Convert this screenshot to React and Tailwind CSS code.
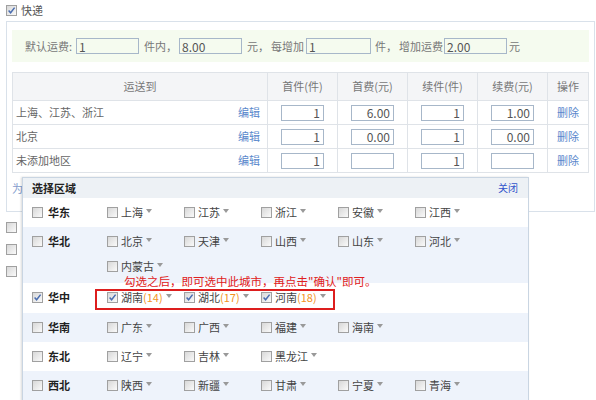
import React from 'react'

const Box = ({ checked }) => (
  <span className="inline-flex w-[11px] h-[11px] shrink-0 items-center justify-center border border-[#a0a0a0] bg-linear-to-br from-[#d8d8d8] to-[#fafafa]">
    {checked && (
      <svg viewBox="0 0 9 9" className="w-[9px] h-[9px]">
        <path d="M1.6 4.6 L3.6 6.8 L7.6 1.6" stroke="#4a6db0" strokeWidth="1.5" fill="none" />
      </svg>
    )}
  </span>
)

const Arrow = () => (
  <span className="ml-[3px] mb-[3px] inline-block w-0 h-0 border-l-[3px] border-r-[3px] border-t-[4px] border-l-transparent border-r-transparent border-t-[#999]" />
)

const Field = ({ value, w = 'w-[63px]' }) => (
  <input readOnly value={value} className={`${w} h-[16px] border border-[#a7b7c9] px-[2px] text-[12px] text-[#555] leading-none outline-none`} />
)

const Cell = ({ value }) => (
  <input readOnly value={value} className="w-[43px] h-[16px] border border-[#a7b7c9] px-[3px] text-right text-[12px] text-[#555] leading-none outline-none" />
)

const rows = [
  ['上海、江苏、浙江', '1', '6.00', '1', '1.00'],
  ['北京', '1', '0.00', '1', '0.00'],
  ['未添加地区', '1', '', '1', ''],
]

const regions = [
  { name: '华东', bg: 'bg-white', lines: [['上海', '江苏', '浙江', '安徽', '江西']] },
  { name: '华北', bg: 'bg-[#eef3fb]', lines: [['北京', '天津', '山西', '山东', '河北'], ['内蒙古']] },
  {
    name: '华中', bg: 'bg-white', checked: true, extra: true,
    lines: [[{ n: '湖南', c: 14 }, { n: '湖北', c: 17 }, { n: '河南', c: 18 }]],
  },
  { name: '华南', bg: 'bg-[#eef3fb]', lines: [['广东', '广西', '福建', '海南']] },
  { name: '东北', bg: 'bg-white', lines: [['辽宁', '吉林', '黑龙江']] },
  { name: '西北', bg: 'bg-[#eef3fb]', lines: [['陕西', '新疆', '甘肃', '宁夏', '青海']] },
]

function City({ item }) {
  const obj = typeof item === 'string' ? { n: item } : item
  return (
    <div className="w-[77px] flex items-center">
      <Box checked={!!obj.c} />
      <span className="ml-[3px] text-[#444]">{obj.n}</span>
      {obj.c && <span className="text-[#f39323]">({obj.c})</span>}
      <Arrow />
    </div>
  )
}

export default function App() {
  return (
    <div className="relative w-[596px] h-[400px] overflow-hidden bg-white text-[11px] leading-none text-[#666] font-['Noto_Sans_CJK_SC',sans-serif]">
      <div className="flex items-center h-[21px] pl-[6px]">
        <Box checked />
        <span className="ml-[4px] text-[#555]">快递</span>
      </div>

      <div className="ml-[6px] w-[589px] border border-[#d9e1ea] px-[5px] pt-[8px] pb-[8px]">
        <div className="flex items-center h-[32px] bg-[#f5fbef] pl-[13px] text-[#777]">
          <span>默认运费:</span>
          <span className="ml-[4px] flex"><Field value="1" /></span>
          <span className="ml-[5px]">件内，</span>
          <span className="ml-[2px] flex"><Field value="8.00" /></span>
          <span className="ml-[5px]">元，</span>
          <span className="ml-[2px]">每增加</span>
          <span className="ml-[2px] flex"><Field value="1" w="w-[65px]" /></span>
          <span className="ml-[4px]">件，</span>
          <span className="ml-[2px]">增加运费</span>
          <span className="ml-[1px] flex"><Field value="2.00" /></span>
          <span className="ml-[2px]">元</span>
        </div>

        <table className="mt-[10px] w-[576px] border-collapse table-fixed">
          <colgroup>
            <col className="w-[255px]" />
            <col className="w-[70px]" />
            <col className="w-[70px]" />
            <col className="w-[70px]" />
            <col className="w-[70px]" />
            <col className="w-[41px]" />
          </colgroup>
          <thead>
            <tr className="h-[28px] bg-[#f4f5f7] text-[#777]">
              {['运送到', '首件(件)', '首费(元)', '续件(件)', '续费(元)', '操作'].map(h => (
                <th key={h} className="border border-[#dfe3e8] font-normal text-center">{h}</th>
              ))}
            </tr>
          </thead>
          <tbody>
            {rows.map(r => (
              <tr key={r[0]} className="h-[24px]">
                <td className="border border-[#dfe3e8] px-[3px]">
                  <div className="flex justify-between items-center pr-[4px]">
                    <span>{r[0]}</span>
                    <span className="text-[#5a88cc]">编辑</span>
                  </div>
                </td>
                {r.slice(1).map((v, i) => (
                  <td key={i} className="border border-[#dfe3e8] text-center">
                    <Cell value={v} />
                  </td>
                ))}
                <td className="border border-[#dfe3e8] text-center text-[#5a88cc]">删除</td>
              </tr>
            ))}
          </tbody>
        </table>

        <div className="h-[30px] flex items-center">
          <span className="text-[#7f9bcc]">为</span>
        </div>
      </div>

      <div className="mt-[10px] flex flex-col gap-[11px] pl-[6px]">
        {[0, 1, 2].map(t => (
          <div key={t} className="flex items-center h-[11px]">
            <Box />
          </div>
        ))}
      </div>

      <div className="absolute left-[22px] top-[177px] w-[507px] border border-[#c9d5e2] bg-white shadow-[-1px_0_2px_rgba(0,0,0,0.15)]">
        <div className="flex items-center justify-between h-[20px] bg-[#edf1f5] pl-[9px] pr-[10px]">
          <span className="font-bold text-[#222]">选择区域</span>
          <span className="text-[10px] text-[#3355cc]">关闭</span>
        </div>
        {regions.map(g => (
          <div key={g.name} className={`flex ${g.bg} pt-[2px] ${g.lines.length > 1 ? 'pb-[4px]' : g.extra ? 'pb-[3px]' : 'pb-[2px]'}`}>
            <div className="w-[84px] h-[25px] pl-[9px] flex items-center">
              <Box checked={g.checked} />
              <span className="ml-[5px] font-bold text-[#222]">{g.name}</span>
            </div>
            <div className="flex flex-col">
              {g.lines.map((line, i) => (
                <div key={i} className="flex h-[25px] items-center">
                  {line.map((c, j) => <City key={j} item={c} />)}
                </div>
              ))}
            </div>
          </div>
        ))}

        <span className="absolute left-[101px] top-[98px] text-[11.5px] text-[#e02020] whitespace-nowrap">勾选之后，即可选中此城市，再点击"确认"即可。</span>
        <div className="absolute left-[72px] top-[111px] w-[240px] h-[21px] border-2 border-[#dd1e1e]" />
      </div>
    </div>
  )
}
